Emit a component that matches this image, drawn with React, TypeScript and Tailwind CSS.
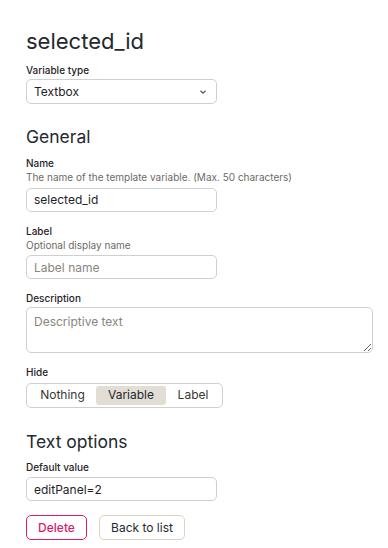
import React from "react";

const Field = ({
  label,
  hint,
  children,
}: {
  label: string;
  hint?: string;
  children: React.ReactNode;
}) => (
  <div className="flex flex-col">
    <label className="text-[10px] font-medium leading-[14px] text-[#1f2328]">{label}</label>
    {hint && <p className="text-[10px] leading-[14px] text-[#6e6a66]">{hint}</p>}
    <div className="mt-[2px]">{children}</div>
  </div>
);

const inputCls =
  "h-[24px] w-[191px] rounded-[5px] border border-[#cfcfcf] bg-white px-[7px] text-[12px] text-[#1f2328] placeholder:text-[#8a8580] outline-none";

const App = () => {
  return (
    <div
      className="h-[548px] w-[388px] overflow-hidden bg-white px-[26px] pt-[26px]"
      style={{ fontFamily: "Inter, 'Noto Sans', sans-serif" }}
    >
      <h1 className="text-[22px] leading-[30px] text-[#24292f]">selected_id</h1>

      <div className="mt-[7px]">
        <Field label="Variable type">
          <div className={inputCls + " flex h-[25px] items-center justify-between"}>
            <span>Textbox</span>
            <svg width="8" height="6" viewBox="0 0 8 6" className="mr-[2px]">
              <path d="M1.5 1.8 L4 4.2 L6.5 1.8" stroke="#555" strokeWidth="1.2" fill="none" />
            </svg>
          </div>
        </Field>
      </div>

      <h2 className="mt-[20px] text-[17.5px] leading-[26px] text-[#24292f]">General</h2>

      <div className="mt-[6px] flex flex-col gap-[12px]">
        <Field label="Name" hint="The name of the template variable. (Max. 50 characters)">
          <input className={inputCls} defaultValue="selected_id" />
        </Field>
        <Field label="Label" hint="Optional display name">
          <input className={inputCls} placeholder="Label name" />
        </Field>
        <Field label="Description">
          <textarea
            className="block h-[46px] w-[347px] rounded-[5px] border border-[#cfcfcf] bg-white px-[7px] py-[5px] text-[12px] leading-[18px] text-[#1f2328] placeholder:text-[#8a8580] outline-none"
            placeholder="Descriptive text"
          />
        </Field>
        <Field label="Hide">
          <div className="inline-flex h-[25px] items-center rounded-[5px] border border-[#cfcfcf] p-[2px] text-[12px] text-[#3a3632]">
            <button className="h-full w-[67px] rounded-[3px]">Nothing</button>
            <button className="h-full w-[70px] rounded-[3px] bg-[#e2ddd5] text-[#24292f]">Variable</button>
            <button className="h-full w-[54px] rounded-[3px]">Label</button>
          </div>
        </Field>
      </div>

      <h2 className="mt-[21px] text-[17.5px] leading-[26px] text-[#24292f]">Text options</h2>

      <div className="mt-[5px]">
        <Field label="Default value">
          <input className={inputCls} defaultValue="editPanel=2" />
        </Field>
      </div>

      <div className="mt-[14px] flex gap-[12px]">
        <button className="h-[25px] w-[61px] rounded-[5px] border border-[#d81b69] text-[12px] font-medium text-[#d81b69]">
          Delete
        </button>
        <button className="h-[25px] w-[86px] rounded-[5px] border border-[#ddd3c6] text-[12px] text-[#24292f]">
          Back to list
        </button>
      </div>
    </div>
  );
};

export default App;
